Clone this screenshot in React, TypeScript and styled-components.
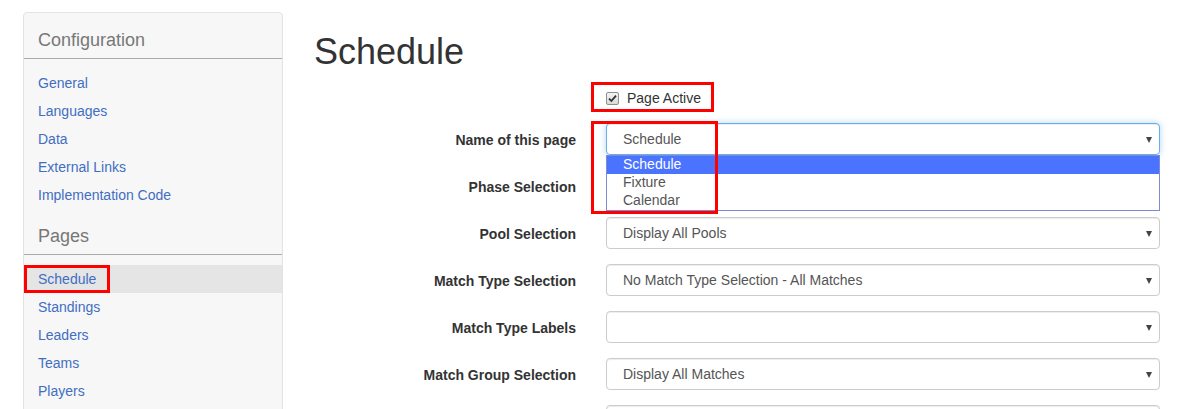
import React from "react";
import styled, { createGlobalStyle } from "styled-components";

// Sidebar data
const configLinks = ["General", "Languages", "Data", "External Links", "Implementation Code"];
const pageLinks = ["Schedule", "Standings", "Leaders", "Teams", "Players"];

// Form rows (the last one only peeks in at the bottom edge)
const fields = [
  { label: "Name of this page", value: "Schedule", open: true },
  { label: "Phase Selection", value: "" },
  { label: "Pool Selection", value: "Display All Pools" },
  { label: "Match Type Selection", value: "No Match Type Selection - All Matches" },
  { label: "Match Type Labels", value: "" },
  { label: "Match Group Selection", value: "Display All Matches" },
  { label: "", value: "" },
];

const pageOptions = ["Schedule", "Fixture", "Calendar"];

const GlobalStyle = createGlobalStyle`
  html, body {
    margin: 0;
    padding: 0;
    background: #fff;
    overflow: hidden;
  }
  body {
    font-family: "Liberation Sans", Arial, sans-serif;
    font-size: 14px;
    color: #333;
  }
  * {
    box-sizing: border-box;
  }
`;

const Page = styled.div`
  display: flex;
  align-items: flex-start;
  padding: 12px 0 0 23px;
  height: 409px;
  overflow: hidden;
`;

const Sidebar = styled.nav`
  flex: none;
  width: 260px;
  background: #f7f7f7;
  border: 1px solid #e3e3e3;
  border-radius: 4px;
  padding-bottom: 60px;
`;

const SectionTitle = styled.h4`
  margin: 0;
  padding: 17px 14px 8px;
  font-size: 18px;
  line-height: 20px;
  font-weight: normal;
  color: #777;
  border-bottom: 1px solid #aaa;
`;

const NavList = styled.ul`
  list-style: none;
  margin: 10px 0 0;
  padding: 0;
`;

const NavItem = styled.li<{ $active?: boolean }>`
  position: relative;
  height: 28px;
  line-height: 28px;
  padding-left: 14px;
  color: #3f6ec2;
  background: ${(p) => (p.$active ? "#e5e5e5" : "transparent")};
`;

const Main = styled.main`
  flex: none;
  width: 876px;
  margin-left: 16px;
`;

const Title = styled.h1`
  margin: 20px 0 0;
  padding: 0 15px;
  font-size: 36px;
  line-height: 40px;
  font-weight: 500;
  color: #333;
`;

const FormRow = styled.div<{ $gap: number; $height: number }>`
  display: grid;
  grid-template-columns: 292px 584px;
  margin-top: ${(p) => p.$gap}px;
  height: ${(p) => p.$height}px;
`;

const Label = styled.div`
  padding: 1px 15px 0 0;
  text-align: right;
  font-weight: bold;
  line-height: 32px;
  color: #333;
`;

const Control = styled.div`
  position: relative;
  padding: 0 15px;
`;

const CheckLabel = styled.label`
  display: flex;
  align-items: center;
  gap: 8px;
  height: 20px;
  line-height: 20px;
  color: #333;
`;

const CheckBox = styled.span`
  display: inline-flex;
  align-items: center;
  justify-content: center;
  width: 13px;
  height: 13px;
  border: 1px solid #8f8f8f;
  border-radius: 2px;
  background: linear-gradient(#f3f3f3, #d9d9d9);
`;

const SelectBox = styled.div<{ $focused?: boolean }>`
  position: relative;
  height: 32px;
  line-height: 31px;
  padding: 0 30px 0 16px;
  border: 1px solid ${(p) => (p.$focused ? "#66afe9" : "#ccc")};
  border-radius: 4px;
  background: #fff;
  color: #555;
  white-space: nowrap;
  overflow: hidden;
  box-shadow: ${(p) =>
    p.$focused
      ? "inset 0 1px 1px rgba(0,0,0,.075), 0 0 6px rgba(102,175,233,.5)"
      : "inset 0 1px 1px rgba(0,0,0,.075)"};

  &::after {
    content: "";
    position: absolute;
    right: 7px;
    top: 13px;
    border-left: 3px solid transparent;
    border-right: 3px solid transparent;
    border-top: 6px solid #444;
  }
`;

const Dropdown = styled.ul`
  position: absolute;
  top: 32px;
  left: 15px;
  right: 15px;
  margin: 0;
  padding: 0;
  list-style: none;
  background: #fff;
  border: 1px solid #7f8ad6;
  z-index: 2;
`;

const Option = styled.li<{ $selected?: boolean }>`
  height: 18px;
  line-height: 17px;
  padding-left: 16px;
  color: ${(p) => (p.$selected ? "#fff" : "#555")};
  background: ${(p) => (p.$selected ? "#4a73ff" : "#fff")};
`;

// Red annotation frames drawn over the screenshot
const Annotation = styled.span<{ $top: number; $left: number; $w: number; $h: number }>`
  position: absolute;
  top: ${(p) => p.$top}px;
  left: ${(p) => p.$left}px;
  width: ${(p) => p.$w}px;
  height: ${(p) => p.$h}px;
  border: 3px solid #ff0000;
  pointer-events: none;
  z-index: 3;
`;

export default function App() {
  return (
    <>
      <GlobalStyle />
      <Page>
        <Sidebar>
          <SectionTitle>Configuration</SectionTitle>
          <NavList>
            {configLinks.map((link) => (
              <NavItem key={link}>{link}</NavItem>
            ))}
          </NavList>
          <SectionTitle>Pages</SectionTitle>
          <NavList>
            {pageLinks.map((link, i) => (
              <NavItem key={link} $active={i === 0}>
                {link}
                {i === 0 && <Annotation $top={0} $left={0} $w={86} $h={28} />}
              </NavItem>
            ))}
          </NavList>
        </Sidebar>

        <Main>
          <Title>Schedule</Title>

          <FormRow $gap={16} $height={20}>
            <div />
            <Control>
              <CheckLabel>
                <CheckBox>
                  <svg width="9" height="9" viewBox="0 0 9 9">
                    <path d="M1 4.6 L3.4 7 L8 1.6" fill="none" stroke="#333" strokeWidth="1.8" />
                  </svg>
                </CheckBox>
                Page Active
              </CheckLabel>
              <Annotation $top={-6} $left={0} $w={123} $h={30} />
            </Control>
          </FormRow>

          {fields.map((field, i) => (
            <FormRow key={i} $gap={15} $height={32}>
              <Label>{field.label}</Label>
              <Control>
                <SelectBox $focused={field.open}>{field.value}</SelectBox>
                {field.open && (
                  <>
                    <Dropdown>
                      {pageOptions.map((opt, j) => (
                        <Option key={opt} $selected={j === 0}>
                          {opt}
                        </Option>
                      ))}
                    </Dropdown>
                    <Annotation $top={-2} $left={0} $w={127} $h={93} />
                  </>
                )}
              </Control>
            </FormRow>
          ))}
        </Main>
      </Page>
    </>
  );
}
